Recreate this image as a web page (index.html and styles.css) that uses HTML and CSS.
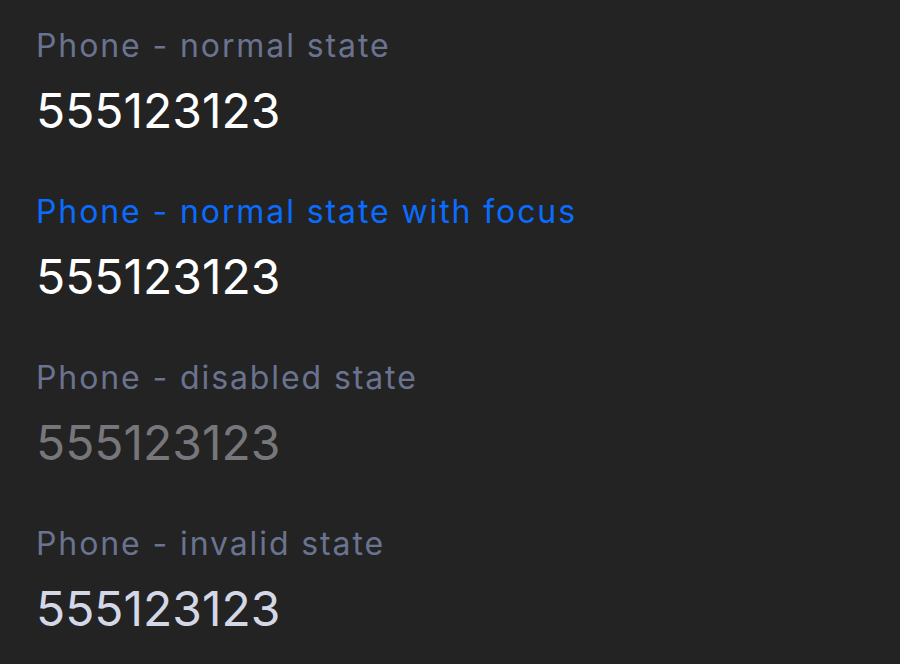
FILE: index.html
```html
<!DOCTYPE html>
<html>
<head>
<meta charset="utf-8">
<link rel="stylesheet" href="styles.css">
</head>
<body>
<div class="list">
  <div class="field">
    <div class="label">Phone - normal state</div>
    <div class="value">555123123</div>
  </div>
  <div class="field">
    <div class="label focus">Phone - normal state with focus</div>
    <div class="value">555123123</div>
  </div>
  <div class="field">
    <div class="label">Phone - disabled state</div>
    <div class="value disabled">555123123</div>
  </div>
  <div class="field">
    <div class="label">Phone - invalid state</div>
    <div class="value invalid">555123123</div>
  </div>
</div>
</body>
</html>
```
FILE: styles.css
```css
html, body {
  margin: 0;
  padding: 0;
  background: #232323;
  height: 100%;
}
body {
  font-family: Inter, "Noto Sans", sans-serif;
  overflow: hidden;
}
.list {
  display: flex;
  flex-direction: column;
  padding: 26px 36px 0;
}
.field {
  display: flex;
  flex-direction: column;
  height: 166px;
}
.label {
  font-size: 32px;
  line-height: 40px;
  letter-spacing: 1.9px;
  color: #6a7390;
}
.label.focus {
  color: #0a6cff;
}
.value {
  margin-top: 17px;
  font-size: 48px;
  line-height: 56px;
  color: #ffffff;
}
.value.disabled {
  color: #77777b;
}
.value.invalid {
  color: #d4d7e6;
}
```
